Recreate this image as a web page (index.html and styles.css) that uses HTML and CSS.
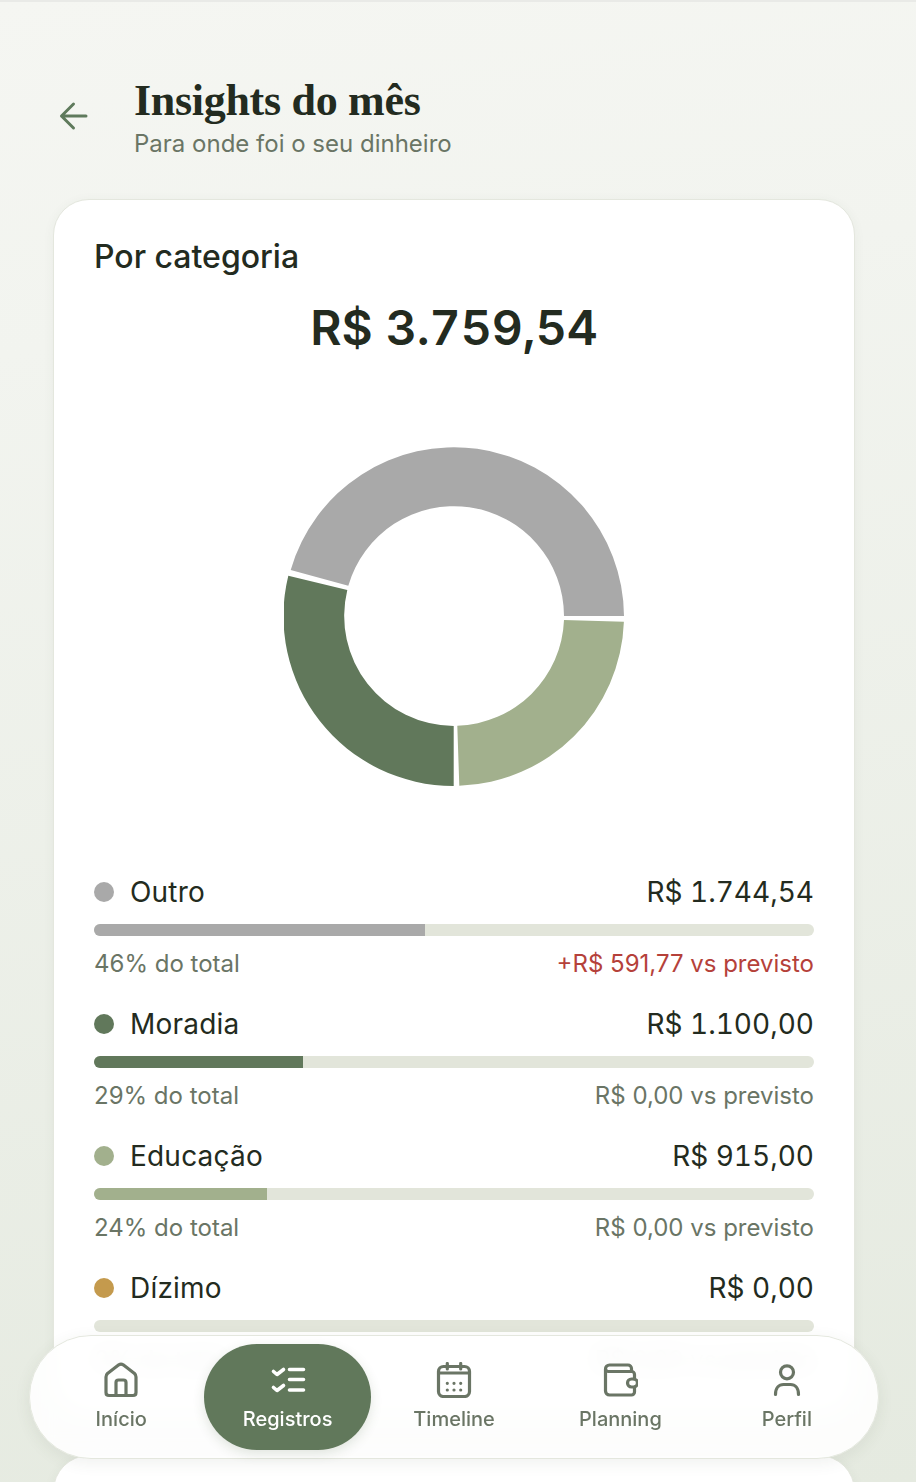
FILE: index.html
```html
<!DOCTYPE html>
<html lang="pt-BR">
<head>
  <meta charset="UTF-8">
  <title>Insights do mês</title>
  <link rel="stylesheet" href="styles.css">
</head>
<body>

  <div class="page">
    <header class="header">
      <svg class="back" width="36" height="36" viewBox="0 0 36 36" fill="none" stroke="#5f7a5c" stroke-width="3" stroke-linecap="round" stroke-linejoin="round">
        <path d="M33 18H8.500M20.500 6L8.500 18L20.500 30"/>
      </svg>
      <div>
        <h1>Insights do mês</h1>
        <p class="subtitle">Para onde foi o seu dinheiro</p>
      </div>
    </header>

    <section class="card">
      <h2>Por categoria</h2>
      <div class="amount">R$ 3.759,54</div>

      <svg class="donut" width="340" height="340" viewBox="284 446 340 340">
        <path fill="#a9a9a9" d="M624 616A170 170 0 0 0 290.700 570L348.300 585.700A110 110 0 0 1 564 616Z"/>
        <path fill="#61785b" d="M288.300 575.700A170 170 0 0 0 453.700 786V726A110 110 0 0 1 347.300 590Z"/>
        <path fill="#a2b08d" d="M459.300 785.700A170 170 0 0 0 623.900 621.700L564 620A110 110 0 0 1 457.300 725.700Z"/>
      </svg>

      <div class="category">
        <div class="row">
          <span class="name"><i class="dot grey"></i>Outro</span>
          <span class="value">R$ 1.744,54</span>
        </div>
        <div class="track"><div class="fill grey" style="width: 46%"></div></div>
        <div class="row small">
          <span>46% do total</span>
          <span class="over">+R$ 591,77 vs previsto</span>
        </div>
      </div>

      <div class="category">
        <div class="row">
          <span class="name"><i class="dot green"></i>Moradia</span>
          <span class="value">R$ 1.100,00</span>
        </div>
        <div class="track"><div class="fill green" style="width: 29%"></div></div>
        <div class="row small">
          <span>29% do total</span>
          <span>R$ 0,00 vs previsto</span>
        </div>
      </div>

      <div class="category">
        <div class="row">
          <span class="name"><i class="dot sage"></i>Educação</span>
          <span class="value">R$ 915,00</span>
        </div>
        <div class="track"><div class="fill sage" style="width: 24%"></div></div>
        <div class="row small">
          <span>24% do total</span>
          <span>R$ 0,00 vs previsto</span>
        </div>
      </div>

      <div class="category">
        <div class="row">
          <span class="name"><i class="dot gold"></i>Dízimo</span>
          <span class="value">R$ 0,00</span>
        </div>
        <div class="track"></div>
        <div class="row small">
          <span>0% do total</span>
          <span>R$ 0,00 vs previsto</span>
        </div>
      </div>
    </section>

    <section class="card next"></section>
  </div>

  <nav class="nav">
    <a class="nav-item">
      <svg class="icon" viewBox="0 0 36 36">
        <path d="M3 15C3 13.500 3.500 12.500 4.500 11.500L15.800 2.800Q18 1.400 20.200 2.800L31.500 11.500C32.500 12.500 33 13.500 33 15V30.500C33 32.500 32 33.500 30 33.500H6C4 33.500 3 32.500 3 30.500Z"/>
        <path d="M13 33V20.500C13 19 14 18 15.500 18H20.500C22 18 23 19 23 20.500V33"/>
      </svg>
      <span>Início</span>
    </a>
    <a class="nav-item active">
      <svg class="icon" viewBox="0 0 36 36">
        <path class="bold" d="M3.500 9.500L7 12.500L13.500 7.500M3.500 25.500L7 28.500L13.500 23.500M19.500 7.500H33.500M19.500 17.500H33.500M19.500 28H33.500"/>
      </svg>
      <span>Registros</span>
    </a>
    <a class="nav-item">
      <svg class="icon" viewBox="0 0 36 36">
        <rect x="2.500" y="4.500" width="31" height="30" rx="5"/>
        <path d="M11.300 1.500V7M24.700 1.500V7M2.500 11H33.500"/>
        <path d="M11.300 21.300h.01M18 21.300h.01M24.700 21.300h.01M11.300 28h.01M18 28h.01M24.700 28h.01"/>
      </svg>
      <span>Timeline</span>
    </a>
    <a class="nav-item">
      <svg class="icon" viewBox="0 0 36 36">
        <path d="M29.500 9.500V6.500A3.500 3.500 0 0 0 26 3H7.500A4 4 0 0 0 3.500 7V29A4 4 0 0 0 7.500 33H29.500A3 3 0 0 0 32.500 30V26"/>
        <path d="M3.500 7A3 3 0 0 0 6.500 9.500H29.500A3 3 0 0 1 32.500 12.500V17"/>
        <rect x="25.500" y="17" width="10" height="8" rx="4"/>
      </svg>
      <span>Planning</span>
    </a>
    <a class="nav-item">
      <svg class="icon" viewBox="0 0 36 36">
        <circle cx="18" cy="10.300" r="6.500"/>
        <path d="M6.500 32.500C6.500 26 10 22.500 14.500 22.500H21.500C26 22.500 29.500 26 29.500 32.500"/>
      </svg>
      <span>Perfil</span>
    </a>
  </nav>

</body>
</html>
```

FILE: styles.css
```css
html, body {
  height: 100%;
  overflow: hidden;
}
body {
  margin: 0;
  font-family: Inter, "Noto Sans", sans-serif;
  color: #232b20;
  background: linear-gradient(172deg, #f5f6f2 0%, #f2f4ef 22%, #e5eae0 100%);
  box-shadow: inset 0 2px 0 #e9eae7;
}
.page {
  padding: 78px 61px 0 53px;
}
.header {
  display: flex;
  align-items: flex-start;
  gap: 45px;
  margin-bottom: 39px;
}
.back {
  margin-top: 20px;
}
h1 {
  margin: 0;
  font-family: "Liberation Serif", serif;
  font-size: 44px;
  font-weight: 700;
  line-height: 46px;
  letter-spacing: -0.3px;
}
.subtitle {
  margin: 4px 0 0;
  font-size: 24px;
  line-height: 32px;
  color: #6a7565;
}
.card {
  box-sizing: border-box;
  background: #fff;
  border: 1px solid #e4e7de;
  border-radius: 36px;
  padding: 40px;
  box-shadow: 0 2px 12px rgba(60, 80, 50, 0.05);
}
.card.next {
  margin-top: 40px;
  height: 300px;
}
h2 {
  margin: 0;
  font-size: 32px;
  font-weight: 500;
  line-height: 34px;
}
.amount {
  margin-top: 26px;
  font-size: 48px;
  font-weight: 600;
  font-variant-numeric: tabular-nums;
  line-height: 56px;
  text-align: center;
}
.donut {
  display: block;
  margin: 90px auto 88px;
}
.category {
  margin-bottom: 28px;
}
.category:last-child {
  margin-bottom: 0;
}
.row {
  display: flex;
  justify-content: space-between;
  font-size: 28px;
  line-height: 36px;
  letter-spacing: 0.2px;
}
.value {
  font-variant-numeric: tabular-nums;
  letter-spacing: 0;
}
.name {
  display: flex;
  align-items: center;
  gap: 16px;
}
.dot {
  width: 20px;
  height: 20px;
  border-radius: 50%;
}
.track {
  height: 12px;
  margin: 14px 0;
  border-radius: 6px;
  background: #e2e5da;
  overflow: hidden;
}
.fill {
  height: 100%;
}
.small {
  font-size: 24px;
  line-height: 28px;
  letter-spacing: 0;
  color: #6a7565;
}
.over {
  color: #b5413a;
}
.grey { background: #a9a9a9; }
.green { background: #61785b; }
.sage { background: #a2b08d; }
.gold { background: #c49a4d; }

.nav {
  position: fixed;
  left: 29px;
  top: 1335px;
  box-sizing: border-box;
  width: 850px;
  height: 124px;
  display: flex;
  padding: 8px;
  border: 1px solid #e4e7de;
  border-radius: 62px;
  background: rgba(255, 255, 255, 0.9);
  backdrop-filter: blur(12px);
  box-shadow: 0 4px 16px rgba(60, 80, 50, 0.08);
}
.nav-item {
  flex: 1;
  display: flex;
  flex-direction: column;
  align-items: center;
  gap: 8px;
  padding-top: 18px;
  border-radius: 53px;
  font-size: 20px;
  font-weight: 500;
  line-height: 26px;
  color: #6a7565;
}
.nav-item.active {
  background: #61785b;
  color: #fff;
  box-shadow: 0 4px 12px rgba(60, 80, 50, 0.15);
}
.icon {
  width: 36px;
  height: 36px;
  fill: none;
  stroke: currentColor;
  stroke-width: 3.2;
  stroke-linecap: round;
  stroke-linejoin: round;
}
.icon .bold {
  stroke-width: 3.6;
}
```
